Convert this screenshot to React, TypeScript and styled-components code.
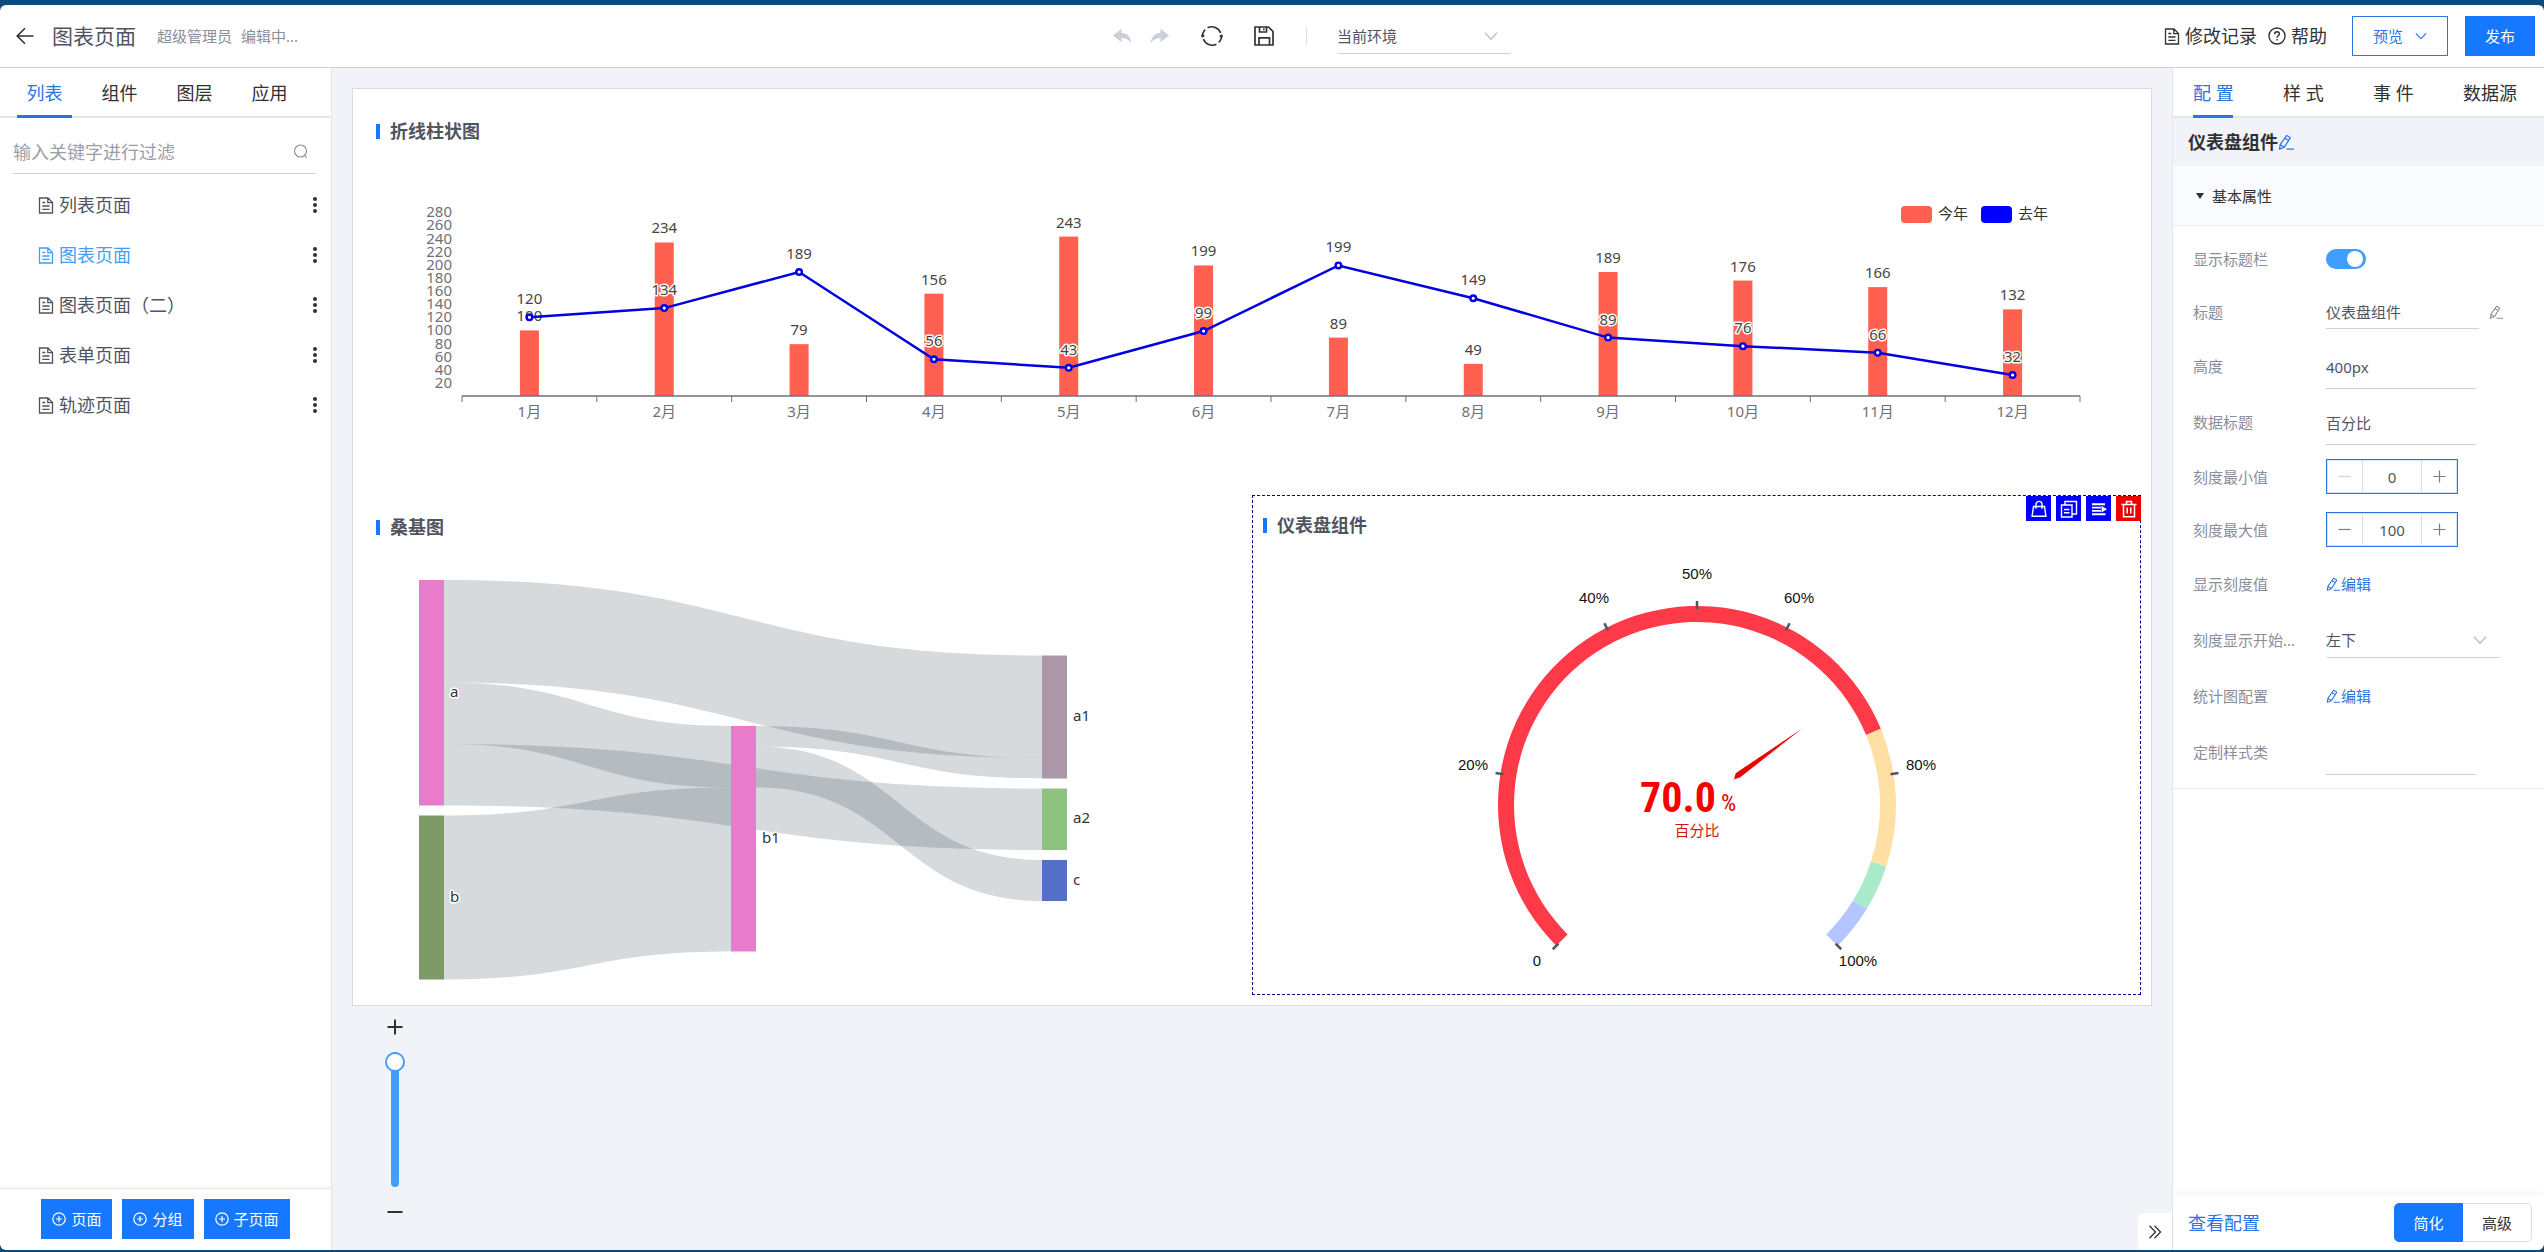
import React from "react";
import styled, { createGlobalStyle, css } from "styled-components";

const color = {
  frame: "#0b4a7a",
  primary: "#1677ff",
  link: "#2b74e2",
  sky: "#409eff",
  canvas: "#f1f3f8",
  line: "#cdd0d7",
  soft: "#e4e6ec",
  text: "#303133",
  body: "#50545f",
  muted: "#8a8e9b",
};

const GlobalStyle = createGlobalStyle`
  *, *::before, *::after { box-sizing: border-box; }
  body {
    margin: 0;
    background: ${color.frame};
    color: ${color.text};
    font-family: "Noto Sans", "Noto Sans CJK SC", sans-serif;
    font-size: 15px;
    line-height: 20px;
  }
  button, input, select { font: inherit; color: inherit; margin: 0; }
  button { cursor: pointer; }
  svg { display: block; flex: none; }
`;

/* ---------- icons ---------- */

const Stroke = styled.svg.attrs({ fill: "none", stroke: "currentColor", "aria-hidden": true })``;

const BackIcon = () => (
  <Stroke width="18" height="18" viewBox="0 0 18 18" strokeWidth="1.6">
    <path d="M17.5 9H1.5M9 1.2 1.2 9 9 16.8" />
  </Stroke>
);
const DocIcon = () => (
  <Stroke width="16" height="17" viewBox="0 0 16 17" strokeWidth="1.3">
    <path d="M1.500 1h8.500L14.500 5.500V16h-13zM9.800 1v4.700h4.700M4.300 5.500h3M4.300 9h7.200M4.300 12.300h7.200" />
  </Stroke>
);
const SearchIcon = () => (
  <Stroke width="15" height="15" viewBox="0 0 15 15" strokeWidth="1.1">
    <circle cx="7.500" cy="7" r="6" />
    <path d="m11.300 11 2.500 2.800" />
  </Stroke>
);
const MoreIcon = () => (
  <svg width="6" height="18" viewBox="0 0 6 18" fill="currentColor" aria-hidden>
    <circle cx="3" cy="3" r="2" />
    <circle cx="3" cy="9" r="2" />
    <circle cx="3" cy="15" r="2" />
  </svg>
);
const ArrowTurnIcon = ({ mirrored }: { mirrored?: boolean }) => (
  <svg width="19" height="17" viewBox="0 0 19 17" fill="currentColor" aria-hidden>
    <path
      transform={mirrored ? "translate(19 0) scale(-1 1)" : undefined}
      d="M0 7.5 8.5.8v4.1c5.6.2 9.3 3.4 9.9 11-2-3.7-4.9-5.6-9.9-5.8v4.1z"
    />
  </svg>
);
const RefreshIcon = () => (
  <Stroke width="22" height="22" viewBox="0 0 22 22" strokeWidth="1.6">
    <path d="M1.600 12.500A9.300 9.300 0 0 1 4.200 4.600M6.600 2.800A9.300 9.300 0 0 1 19.600 8" />
    <path d="M20.400 9.500A9.300 9.300 0 0 1 17.800 17.400M15.400 19.200A9.300 9.300 0 0 1 2.400 14" />
    <path d="M.3 10.700h3M18.700 11.300h3" strokeWidth="1.900" />
  </Stroke>
);
const SaveIcon = () => (
  <Stroke width="20" height="20" viewBox="0 0 20 20" strokeWidth="1.7">
    <path d="M1 1h13.500L19 5.500V19H1zM5 19v-7.200h10.500V19M5.500 1v5h7V1M9.800 2.500v1.800" />
  </Stroke>
);
const ChevronIcon = ({ size = 14 }: { size?: number }) => (
  <Stroke width={size} height={size} viewBox="0 0 14 14" strokeWidth="1.3">
    <path d="m1 3.800 6 6.400 6-6.400" />
  </Stroke>
);
const HelpIcon = () => (
  <Stroke width="18" height="18" viewBox="0 0 18 18" strokeWidth="1.4">
    <circle cx="9" cy="9" r="8" />
    <path d="M6.600 7.200C6.600 5.600 7.600 4.700 9 4.700s2.400.9 2.400 2.200c0 1.700-2.400 2-2.400 3.900M9 12v1.500" />
  </Stroke>
);
const PencilIcon = ({ size = 14 }: { size?: number }) => (
  <Stroke width={size} height={size} viewBox="0 0 16 16" strokeWidth="1.2">
    <path d="M8.700 1.500 12.300 3.600 6.300 13.300 1.600 15 2.200 10.600zM6.900 4.200l3.700 2.200M2.200 10.800l3.800 2.300M8.500 15.200H16" />
  </Stroke>
);
const AddCircleIcon = () => (
  <Stroke width="14" height="14" viewBox="0 0 14 14" strokeWidth="1.2">
    <circle cx="7" cy="7" r="6.200" />
    <path d="M7 4v6M4 7h6" />
  </Stroke>
);
const PlusIcon = ({ size = 13, thick = 1.5 }: { size?: number; thick?: number }) => (
  <Stroke width={size} height={size} viewBox="0 0 16 16" strokeWidth={thick}>
    <path d="M.5 8h15M8 .5v15" />
  </Stroke>
);
const MinusIcon = ({ size = 13, thick = 1.5 }: { size?: number; thick?: number }) => (
  <Stroke width={size} height={size} viewBox="0 0 16 16" strokeWidth={thick}>
    <path d="M.5 8h15" />
  </Stroke>
);
const DoubleRightIcon = () => (
  <Stroke width="14" height="14" viewBox="0 0 14 14" strokeWidth="1.3">
    <path d="m1.500.8 6 6.200-6 6.200M6.500.8l6 6.200-6 6.200" />
  </Stroke>
);
const BagIcon = () => (
  <Stroke width="18" height="18" viewBox="0 0 18 18" strokeWidth="1.4">
    <path d="M3.500 6.500h11l1.400 9.700H2.100zM6 8.800V4.300C6 2.600 7.300 1.400 9 1.400s3 1.200 3 2.900v4.500" />
  </Stroke>
);
const CopyIcon = () => (
  <Stroke width="18" height="18" viewBox="0 0 18 18" strokeWidth="1.4">
    <path d="M1.500 5h10.500v12h-10.500zM5 4.500v-3h11.500v12.500h-4M4 9.500h5.500M4 12.800h5.500" />
  </Stroke>
);
const LinesIcon = () => (
  <Stroke width="18" height="18" viewBox="0 0 18 18" strokeWidth="1.9">
    <path d="M2 4.200h13M2 7.600h9M2 10.900h9M2 14.300h13.500" />
    <path d="m11.500 5.800 5.500 3.400-5.500 3.400z" fill="currentColor" stroke="none" />
  </Stroke>
);
const TrashIcon = () => (
  <Stroke width="18" height="18" viewBox="0 0 18 18" strokeWidth="1.5">
    <path d="M1.500 4.500h15M6.500 4V1.600h5V4M3.500 4.500v12.200h11V4.500M7.200 7.500v6M10.800 7.500v6" />
  </Stroke>
);

/* ---------- page frame ---------- */

const Frame = styled.div`
  height: 100vh;
  padding: 5px 0 2px;
`;
const Shell = styled.div`
  display: flex;
  flex-direction: column;
  height: 100%;
  overflow: hidden;
  border-radius: 6px;
  background: #fff;
`;
const Header = styled.header`
  display: grid;
  grid-template-columns: 1fr auto 1fr;
  align-items: center;
  flex: none;
  height: 63px;
  padding: 0 9px 0 16px;
  border-bottom: 1px solid ${color.line};
`;
const HeaderSide = styled.div<{ $end?: boolean }>`
  display: flex;
  align-items: center;
  justify-content: ${(p) => (p.$end ? "flex-end" : "flex-start")};
`;
const PageName = styled.h1`
  margin: 0 21px 0 18px;
  color: ${color.body};
  font-size: 21px;
  font-weight: 400;
  line-height: 28px;
`;
const Editing = styled.span`
  margin-right: 9px;
  color: ${color.muted};
`;
const IconButton = styled.button<{ $gap?: number }>`
  display: flex;
  padding: 0;
  margin-left: ${(p) => p.$gap ?? 0}px;
  border: 0;
  background: none;
  color: ${color.text};
  &:disabled { color: #cbcfd8; }
`;
const Divider = styled.span`
  width: 1px;
  height: 20px;
  margin: 0 30px 0 32px;
  background: #dcdfe6;
`;
const Tools = styled.div`
  display: flex;
  align-items: center;
  padding-left: 74px;
`;
const SelectBox = styled.div`
  position: relative;
  width: 175px;
  height: 35px;
  border-bottom: 1px solid ${color.line};
  border-radius: 3px;
  color: ${color.body};
  svg {
    position: absolute;
    right: 14px;
    top: 10px;
    color: #b9bdc8;
    pointer-events: none;
  }
`;
const NativeSelect = styled.select`
  width: 100%;
  height: 100%;
  padding: 0;
  border: 0;
  appearance: none;
  background: none;
  outline: none;
`;
const TextButton = styled.button`
  display: flex;
  align-items: center;
  gap: 5px;
  margin-right: 11px;
  padding: 0;
  border: 0;
  background: none;
  font-size: 18px;
  line-height: 24px;
`;
const PreviewButton = styled.button`
  display: flex;
  align-items: center;
  justify-content: center;
  gap: 12px;
  width: 96px;
  height: 40px;
  margin: 0 17px 0 14px;
  padding: 0;
  border: 1px solid ${color.link};
  background: #fff;
  color: ${color.link};
`;
const SolidButton = styled.button<{ $width?: number }>`
  display: flex;
  align-items: center;
  justify-content: center;
  gap: 5px;
  height: 40px;
  padding: 0 11px;
  ${(p) => p.$width && css`width: ${p.$width}px;`}
  border: 0;
  background: ${color.primary};
  color: #fff;
`;
const Main = styled.div`
  display: flex;
  flex: 1;
  min-height: 0;
`;

/* ---------- tabs ---------- */

const Tabs = styled.div<{ $gap: number; $start: number }>`
  display: flex;
  gap: ${(p) => p.$gap}px;
  flex: none;
  height: 50px;
  padding-left: ${(p) => p.$start}px;
  box-shadow: inset 0 -2px 0 ${color.soft};
`;
const Tab = styled.button<{ $active?: boolean; $width: number }>`
  width: ${(p) => p.$width}px;
  padding: 2px 0 0;
  border: 0;
  border-bottom: 3px solid ${(p) => (p.$active ? color.link : "transparent")};
  background: none;
  color: ${(p) => (p.$active ? color.link : color.text)};
  font-size: 18px;
  line-height: 24px;
  white-space: nowrap;
`;

/* ---------- left sidebar ---------- */

const Sidebar = styled.aside`
  display: flex;
  flex-direction: column;
  flex: none;
  width: 332px;
  border-right: 1px solid ${color.soft};
`;
const SearchBox = styled.label`
  display: flex;
  align-items: center;
  height: 44px;
  margin: 12px 15px 6px 13px;
  padding-right: 8px;
  border-bottom: 1px solid ${color.line};
  color: ${color.muted};
`;
const SearchInput = styled.input`
  flex: 1;
  min-width: 0;
  height: 36px;
  padding: 0;
  border: 0;
  outline: none;
  background: none;
  font-size: 18px;
  &::placeholder { color: #9a9ea9; }
`;
const PageList = styled.ul`
  flex: 1;
  margin: 0;
  padding: 0;
  list-style: none;
`;
const PageItem = styled.li<{ $active?: boolean }>`
  display: flex;
  align-items: center;
  justify-content: space-between;
  height: 50px;
  padding: 0 13px 0 38px;
  color: ${(p) => (p.$active ? color.sky : color.body)};
`;
const PageLink = styled.a`
  display: flex;
  align-items: center;
  gap: 5px;
  color: inherit;
  font-size: 18px;
  line-height: 24px;
  text-decoration: none;
`;
const SidebarFooter = styled.footer`
  display: flex;
  justify-content: center;
  gap: 10px;
  height: 62px;
  padding-top: 10px;
  border-top: 1px solid ${color.soft};
  box-shadow: 0 -1px 3px rgba(0, 0, 0, 0.05);
`;

/* ---------- canvas ---------- */

const Canvas = styled.main`
  position: relative;
  flex: 1;
  min-width: 0;
  padding: 20px;
  background: ${color.canvas};
`;
const Board = styled.div`
  display: grid;
  grid-template-columns: 1fr 1fr;
  grid-template-rows: 396px 500px;
  padding: 10px;
  border: 1px solid #d9dce4;
  background: #fff;
`;
const Widget = styled.section<{ $wide?: boolean; $selected?: boolean }>`
  position: relative;
  display: flex;
  flex-direction: column;
  grid-column: ${(p) => (p.$wide ? "span 2" : "auto")};
  min-width: 0;
  min-height: 0;
  padding: ${(p) => (p.$selected ? 10 : 12)}px;
  border: 1px ${(p) => (p.$selected ? "dashed #00008f" : "solid transparent")};
`;
const WidgetTitle = styled.h2`
  display: flex;
  align-items: center;
  gap: 10px;
  flex: none;
  height: 38px;
  margin: 0;
  color: ${color.body};
  font-size: 18px;
  font-weight: 700;
  &::before {
    content: "";
    width: 4px;
    height: 15px;
    background: ${color.primary};
  }
`;
const Chart = styled.svg`
  flex: 1;
  width: 100%;
  min-height: 0;
  font-size: 15px;
`;
const WidgetActions = styled.div`
  position: absolute;
  top: 0;
  right: -1px;
  display: flex;
  gap: 5px;
`;
const ActionButton = styled.button<{ $danger?: boolean }>`
  display: flex;
  align-items: center;
  justify-content: center;
  width: 25px;
  height: 25px;
  padding: 0;
  border: 0;
  background: ${(p) => (p.$danger ? "#ee0000" : "#0000ff")};
  color: #fff;
`;
const ZoomControl = styled.div`
  display: flex;
  flex-direction: column;
  align-items: center;
  gap: 17px;
  width: 40px;
  margin: 13px 0 0 23px;
`;
const ZoomRange = styled.input`
  width: 20px;
  height: 135px;
  appearance: none;
  background: none;
  writing-mode: vertical-lr;
  direction: rtl;
  &::-webkit-slider-runnable-track {
    width: 8px;
    border-radius: 4px;
    background: ${color.sky};
  }
  &::-webkit-slider-thumb {
    appearance: none;
    width: 20px;
    height: 20px;
    margin-left: -6px;
    border: 2px solid ${color.sky};
    border-radius: 50%;
    background: #fff;
  }
`;
const CollapseButton = styled.button`
  position: absolute;
  right: 0;
  bottom: 0;
  display: flex;
  align-items: center;
  justify-content: center;
  width: 34px;
  height: 37px;
  padding: 0;
  border: 0;
  border-radius: 6px 0 0 6px;
  background: #fff;
`;

/* ---------- inspector ---------- */

const Inspector = styled.aside`
  display: flex;
  flex-direction: column;
  flex: none;
  width: 372px;
  border-left: 1px solid ${color.soft};
`;
const InspectorTitle = styled.h2`
  display: flex;
  align-items: center;
  flex: none;
  height: 48px;
  margin: 0;
  padding-left: 15px;
  background: ${color.canvas};
  font-size: 18px;
  font-weight: 700;
  svg { color: ${color.link}; }
`;
const GroupHeader = styled.button`
  display: flex;
  align-items: center;
  gap: 8px;
  flex: none;
  height: 60px;
  padding: 0 23px;
  border: 0;
  border-bottom: 1px solid #ebedf3;
  background: #fafbfe;
  &::before {
    content: "";
    border: 4px solid transparent;
    border-top: 6px solid ${color.text};
    border-bottom: 0;
  }
`;
const Fields = styled.div`
  padding: 6px 0 8px 20px;
  border-bottom: 1px solid ${color.soft};
`;
const Field = styled.div<{ $height: number }>`
  display: grid;
  grid-template-columns: 133px 1fr;
  align-items: center;
  height: ${(p) => p.$height}px;
`;
const FieldLabel = styled.label`
  color: ${color.muted};
`;
const Inline = styled.div`
  display: flex;
  align-items: center;
  gap: 10px;
  color: ${color.muted};
`;
const TextInput = styled.input<{ $tall?: boolean }>`
  width: ${(p) => (p.$tall ? 150 : 153)}px;
  height: ${(p) => (p.$tall ? 46 : 34)}px;
  padding: ${(p) => (p.$tall ? "2px" : "0")} 0 0;
  border: 0;
  border-bottom: 1px solid ${color.line};
  outline: none;
  background: none;
  color: ${color.body};
`;
const Switch = styled.input`
  position: relative;
  width: 40px;
  height: 20px;
  appearance: none;
  border-radius: 10px;
  background: #c9cdd6;
  &::before {
    content: "";
    position: absolute;
    top: 2px;
    left: 2px;
    width: 16px;
    height: 16px;
    border-radius: 50%;
    background: #fff;
  }
  &:checked { background: ${color.sky}; }
  &:checked::before { left: 21px; }
`;
const Stepper = styled.div`
  display: grid;
  grid-template-columns: 35px 1fr 35px;
  width: 132px;
  height: 35px;
  border: 1px solid ${color.link};
  box-shadow: inset 0 0 0 1px #cfe6ff;
  color: ${color.body};
`;
const StepButton = styled.button`
  display: flex;
  align-items: center;
  justify-content: center;
  padding: 0;
  border: 0;
  background: none;
  color: #808080;
  &:disabled { color: #d0d3d9; }
`;
const StepInput = styled.input`
  width: 100%;
  min-width: 0;
  padding: 0;
  border: 0;
  border-left: 1px solid #dcdfe6;
  border-right: 1px solid #dcdfe6;
  outline: none;
  background: none;
  text-align: center;
  appearance: textfield;
  &::-webkit-inner-spin-button { appearance: none; margin: 0; }
`;
const EditLink = styled.button`
  display: flex;
  align-items: center;
  gap: 1px;
  padding: 0;
  border: 0;
  background: none;
  color: ${color.link};
`;
const InspectorFooter = styled.footer`
  display: flex;
  align-items: center;
  justify-content: space-between;
  flex: none;
  height: 55px;
  margin-top: auto;
  padding: 0 12px 0 15px;
  box-shadow: 0 -2px 6px rgba(0, 0, 0, 0.05);
`;
const ConfigLink = styled.a`
  color: ${color.link};
  font-size: 18px;
  text-decoration: none;
`;
const Segmented = styled.div`
  display: flex;
  height: 39px;
`;
const Segment = styled.button<{ $active?: boolean }>`
  width: 69px;
  padding: 0;
  border: 1px solid ${(p) => (p.$active ? color.primary : "#dcdfe6")};
  background: ${(p) => (p.$active ? color.primary : "#fff")};
  color: ${(p) => (p.$active ? "#fff" : color.text)};
  &:first-child { border-radius: 5px 0 0 5px; }
  &:last-child { border-left: 0; border-radius: 0 5px 5px 0; }
`;

/* ---------- bar and line chart ---------- */

const thisYear = [100, 234, 79, 156, 243, 199, 89, 49, 189, 176, 166, 132];
const lastYear = [120, 134, 189, 56, 43, 99, 199, 149, 89, 76, 66, 32];
const axis = { left: 86, right: 1704, base: 246, unit: 0.656 };

const halo = { paintOrder: "stroke", stroke: "#fff", strokeWidth: 3, strokeLinejoin: "round" } as const;

function BarLineChart() {
  const step = (axis.right - axis.left) / 12;
  const x = (i: number) => axis.left + step * (i + 0.5);
  const y = (v: number) => axis.base - v * axis.unit;
  const scale = Array.from({ length: 14 }, (_, i) => (i + 1) * 20);
  return (
    <Chart viewBox="0 0 1752 332" role="img" aria-label="折线柱状图">
      <g fill="#6e7079">
        {scale.map((v) => (
          <text key={v} x="76" y={y(v) + 5} textAnchor="end">{v}</text>
        ))}
        {thisYear.map((_, i) => (
          <text key={i} x={x(i)} y="267" textAnchor="middle">{i + 1}月</text>
        ))}
      </g>
      {thisYear.map((v, i) => (
        <rect key={i} x={x(i) - 9.5} y={y(v)} width="19" height={v * axis.unit} fill="#ff604f" />
      ))}
      <path d={`M${axis.left} ${axis.base}H${axis.right}`} stroke="#6e7079" strokeWidth="1.5" />
      {Array.from({ length: 13 }, (_, i) => (
        <path key={i} d={`M${axis.left + step * i} ${axis.base}v6`} stroke="#6e7079" />
      ))}
      <g fill="#464646" textAnchor="middle">
        {thisYear.map((v, i) => (
          <text key={i} x={x(i)} y={y(v) - 9} {...halo}>{v}</text>
        ))}
      </g>
      <polyline
        points={lastYear.map((v, i) => `${x(i)},${y(v)}`).join(" ")}
        fill="none"
        stroke="#0000e0"
        strokeWidth="2.5"
      />
      {lastYear.map((v, i) => (
        <circle key={i} cx={x(i)} cy={y(v)} r="2.8" fill="#fff" stroke="#0000e0" strokeWidth="2.4" />
      ))}
      <g fill="#464646" textAnchor="middle">
        {lastYear.map((v, i) => (
          <text key={i} x={x(i)} y={y(v) - 13} {...halo}>{v}</text>
        ))}
      </g>
      <rect x="1525" y="56" width="31" height="17" rx="4" fill="#ff604f" />
      <text x="1562" y="69" fill="#333">今年</text>
      <rect x="1605" y="56" width="31" height="17" rx="4" fill="#0000ff" />
      <text x="1642" y="69" fill="#333">去年</text>
    </Chart>
  );
}

/* ---------- sankey chart ---------- */

const nodes = [
  { name: "a", x: 43, y: 34, value: 11, fill: "#e87ccb" },
  { name: "b", x: 43, y: 269.5, value: 8, fill: "#7c9b69" },
  { name: "b1", x: 355, y: 180, value: 11, fill: "#e87ccb" },
  { name: "a1", x: 666, y: 109.5, value: 6, fill: "#ab97a8" },
  { name: "a2", x: 666, y: 242.5, value: 3, fill: "#8dc27f" },
  { name: "c", x: 666, y: 314, value: 2, fill: "#536fc6" },
];
const flows = [
  { from: 0, fromAt: 0, to: 3, toAt: 0, value: 5 },
  { from: 0, fromAt: 5, to: 2, toAt: 0, value: 3 },
  { from: 0, fromAt: 8, to: 4, toAt: 0, value: 3 },
  { from: 1, fromAt: 0, to: 2, toAt: 3, value: 8 },
  { from: 2, fromAt: 0, to: 3, toAt: 5, value: 1 },
  { from: 2, fromAt: 1, to: 5, toAt: 0, value: 2 },
];
const sankeyUnit = 20.5;
const nodeWidth = 25;

function SankeyChart() {
  return (
    <Chart viewBox="0 0 863 436" role="img" aria-label="桑基图">
      {flows.map((f, i) => {
        const x0 = nodes[f.from].x + nodeWidth;
        const x1 = nodes[f.to].x;
        const y0 = nodes[f.from].y + f.fromAt * sankeyUnit;
        const y1 = nodes[f.to].y + f.toAt * sankeyUnit;
        const h = f.value * sankeyUnit;
        const mid = (x0 + x1) / 2;
        return (
          <path
            key={i}
            d={`M${x0} ${y0}C${mid} ${y0} ${mid} ${y1} ${x1} ${y1}V${y1 + h}C${mid} ${y1 + h} ${mid} ${y0 + h} ${x0} ${y0 + h}Z`}
            fill="#314656"
            fillOpacity="0.2"
          />
        );
      })}
      {nodes.map((n) => (
        <rect key={n.name} x={n.x} y={n.y} width={nodeWidth} height={n.value * sankeyUnit} fill={n.fill} />
      ))}
      {nodes.map((n) => (
        <text key={n.name} x={n.x + nodeWidth + 6} y={n.y + (n.value * sankeyUnit) / 2 + 4} fill="#333" {...halo}>
          {n.name}
        </text>
      ))}
    </Chart>
  );
}

/* ---------- gauge chart ---------- */

const dial = { cx: 434, cy: 261, outer: 199, inner: 183 };
const bands = [
  { from: 0, to: 0.75, fill: "#ff3a48" },
  { from: 0.75, to: 0.9, fill: "#ffdfa3" },
  { from: 0.9, to: 0.95, fill: "#a8eaca" },
  { from: 0.95, to: 1, fill: "#b5c5ff" },
];
const marks = [
  { at: 0, text: "0", x: 274, y: 422 },
  { at: 0.2, text: "20%", x: 210, y: 226 },
  { at: 0.4, text: "40%", x: 331, y: 59 },
  { at: 0.5, text: "50%", x: 434, y: 35 },
  { at: 0.6, text: "60%", x: 536, y: 59 },
  { at: 0.8, text: "80%", x: 658, y: 226 },
  { at: 1, text: "100%", x: 595, y: 422 },
];
const polar = (at: number, r: number) => {
  const a = ((225 - 270 * at) * Math.PI) / 180;
  return `${(dial.cx + r * Math.cos(a)).toFixed(2)} ${(dial.cy - r * Math.sin(a)).toFixed(2)}`;
};

const DialText = styled.text`
  font-family: "Liberation Sans", Arial, sans-serif;
`;
const DialValue = styled.text`
  font-family: "Liberation Sans Narrow", "Roboto Condensed", sans-serif;
  font-size: 42px;
  font-weight: 700;
`;
const DialUnit = styled.text`
  font-family: "Liberation Sans Narrow", "Roboto Condensed", sans-serif;
  font-size: 24px;
`;

function GaugeChart() {
  return (
    <Chart viewBox="0 0 867 440" role="img" aria-label="仪表盘组件">
      {bands.map((b) => {
        const large = (b.to - b.from) * 270 > 180 ? 1 : 0;
        return (
          <path
            key={b.fill}
            fill={b.fill}
            d={`M${polar(b.from, dial.outer)}A${dial.outer} ${dial.outer} 0 ${large} 1 ${polar(b.to, dial.outer)}L${polar(b.to, dial.inner)}A${dial.inner} ${dial.inner} 0 ${large} 0 ${polar(b.from, dial.inner)}Z`}
          />
        );
      })}
      {marks.map((m) => (
        <path
          key={m.text}
          d={`M${polar(m.at, dial.outer - 3)}L${polar(m.at, dial.outer + 5)}`}
          stroke="#54555f"
          strokeWidth="2.5"
        />
      ))}
      {marks.map((m) => (
        <DialText key={m.text} x={m.x} y={m.y} textAnchor="middle" fill="#111">{m.text}</DialText>
      ))}
      <path
        transform={`rotate(-36 ${dial.cx} ${dial.cy})`}
        d={`M${dial.cx + 130} ${dial.cy}L${dial.cx + 51} ${dial.cy + 3}L${dial.cx + 45} ${dial.cy + 1}L${dial.cx + 50} ${dial.cy - 3}Z`}
        fill="#f00000"
      />
      <DialValue x="453" y="268" textAnchor="end" fill="#f80000">70.0</DialValue>
      <DialUnit x="458" y="267" fill="#e00000">%</DialUnit>
      <text x={dial.cx} y="292" textAnchor="middle" fill="#d01515">百分比</text>
    </Chart>
  );
}

/* ---------- page ---------- */

const pages = ["列表页面", "图表页面", "图表页面（二）", "表单页面", "轨迹页面"];

function Select({ label, value, id }: { label?: string; value: string; id?: string }) {
  return (
    <SelectBox>
      <NativeSelect id={id} aria-label={label} defaultValue={value}>
        <option>{value}</option>
      </NativeSelect>
      <ChevronIcon />
    </SelectBox>
  );
}

function NumberField({ id, label, value }: { id: string; label: string; value: number }) {
  return (
    <Field $height={53}>
      <FieldLabel htmlFor={id}>{label}</FieldLabel>
      <Stepper>
        <StepButton type="button" aria-label="减少" disabled={value === 0}><MinusIcon /></StepButton>
        <StepInput id={id} type="number" defaultValue={value} />
        <StepButton type="button" aria-label="增加"><PlusIcon /></StepButton>
      </Stepper>
    </Field>
  );
}

function TextField({ id, label, value }: { id: string; label: string; value: string }) {
  return (
    <Field $height={56}>
      <FieldLabel htmlFor={id}>{label}</FieldLabel>
      <TextInput id={id} $tall defaultValue={value} />
    </Field>
  );
}

function EditField({ id, label }: { id: string; label: string }) {
  return (
    <Field $height={56}>
      <FieldLabel htmlFor={id}>{label}</FieldLabel>
      <EditLink id={id} type="button"><PencilIcon />编辑</EditLink>
    </Field>
  );
}

export default function App() {
  return (
    <Frame>
      <GlobalStyle />
      <Shell>
        <Header>
          <HeaderSide>
            <IconButton aria-label="返回"><BackIcon /></IconButton>
            <PageName>图表页面</PageName>
            <Editing>超级管理员</Editing>
            <Editing>编辑中...</Editing>
          </HeaderSide>
          <Tools>
            <IconButton aria-label="撤销" disabled><ArrowTurnIcon /></IconButton>
            <IconButton aria-label="重做" disabled $gap={18}><ArrowTurnIcon mirrored /></IconButton>
            <IconButton aria-label="刷新" $gap={32}><RefreshIcon /></IconButton>
            <IconButton aria-label="保存" $gap={31}><SaveIcon /></IconButton>
            <Divider />
            <Select label="环境" value="当前环境" />
          </Tools>
          <HeaderSide $end>
            <TextButton><DocIcon />修改记录</TextButton>
            <TextButton><HelpIcon />帮助</TextButton>
            <PreviewButton>预览<ChevronIcon size={12} /></PreviewButton>
            <SolidButton $width={70}>发布</SolidButton>
          </HeaderSide>
        </Header>
        <Main>
          <Sidebar>
            <Tabs $gap={20} $start={17}>
              <Tab $width={55} $active>列表</Tab>
              <Tab $width={55}>组件</Tab>
              <Tab $width={55}>图层</Tab>
              <Tab $width={55}>应用</Tab>
            </Tabs>
            <SearchBox>
              <SearchInput placeholder="输入关键字进行过滤" />
              <SearchIcon />
            </SearchBox>
            <PageList>
              {pages.map((name, i) => (
                <PageItem key={name} $active={i === 1}>
                  <PageLink href="#"><DocIcon />{name}</PageLink>
                  <IconButton aria-label="更多"><MoreIcon /></IconButton>
                </PageItem>
              ))}
            </PageList>
            <SidebarFooter>
              <SolidButton><AddCircleIcon />页面</SolidButton>
              <SolidButton><AddCircleIcon />分组</SolidButton>
              <SolidButton><AddCircleIcon />子页面</SolidButton>
            </SidebarFooter>
          </Sidebar>
          <Canvas>
            <Board>
              <Widget $wide>
                <WidgetTitle>折线柱状图</WidgetTitle>
                <BarLineChart />
              </Widget>
              <Widget>
                <WidgetTitle>桑基图</WidgetTitle>
                <SankeyChart />
              </Widget>
              <Widget $selected>
                <WidgetTitle>仪表盘组件</WidgetTitle>
                <GaugeChart />
                <WidgetActions>
                  <ActionButton aria-label="锁定"><BagIcon /></ActionButton>
                  <ActionButton aria-label="复制"><CopyIcon /></ActionButton>
                  <ActionButton aria-label="排列"><LinesIcon /></ActionButton>
                  <ActionButton aria-label="删除" $danger><TrashIcon /></ActionButton>
                </WidgetActions>
              </Widget>
            </Board>
            <ZoomControl>
              <IconButton aria-label="放大"><PlusIcon size={16} thick={2} /></IconButton>
              <ZoomRange type="range" aria-label="缩放" min={0} max={100} defaultValue={100} />
              <IconButton aria-label="缩小"><MinusIcon size={16} thick={2} /></IconButton>
            </ZoomControl>
            <CollapseButton aria-label="收起"><DoubleRightIcon /></CollapseButton>
          </Canvas>
          <Inspector>
            <Tabs $gap={50} $start={20}>
              <Tab $width={40} $active>配 置</Tab>
              <Tab $width={40}>样 式</Tab>
              <Tab $width={40}>事 件</Tab>
              <Tab $width={54}>数据源</Tab>
            </Tabs>
            <InspectorTitle>仪表盘组件<PencilIcon size={16} /></InspectorTitle>
            <GroupHeader>基本属性</GroupHeader>
            <Fields>
              <Field $height={54}>
                <FieldLabel htmlFor="showTitle">显示标题栏</FieldLabel>
                <Switch id="showTitle" type="checkbox" role="switch" defaultChecked />
              </Field>
              <Field $height={52}>
                <FieldLabel htmlFor="title">标题</FieldLabel>
                <Inline>
                  <TextInput id="title" defaultValue="仪表盘组件" />
                  <PencilIcon />
                </Inline>
              </Field>
              <TextField id="height" label="高度" value="400px" />
              <TextField id="dataTitle" label="数据标题" value="百分比" />
              <NumberField id="min" label="刻度最小值" value={0} />
              <NumberField id="max" label="刻度最大值" value={100} />
              <EditField id="ticks" label="显示刻度值" />
              <Field $height={56}>
                <FieldLabel htmlFor="start">刻度显示开始...</FieldLabel>
                <Select id="start" value="左下" />
              </Field>
              <EditField id="chartConfig" label="统计图配置" />
              <TextField id="customClass" label="定制样式类" value="" />
            </Fields>
            <InspectorFooter>
              <ConfigLink href="#">查看配置</ConfigLink>
              <Segmented>
                <Segment $active>简化</Segment>
                <Segment>高级</Segment>
              </Segmented>
            </InspectorFooter>
          </Inspector>
        </Main>
      </Shell>
    </Frame>
  );
}
